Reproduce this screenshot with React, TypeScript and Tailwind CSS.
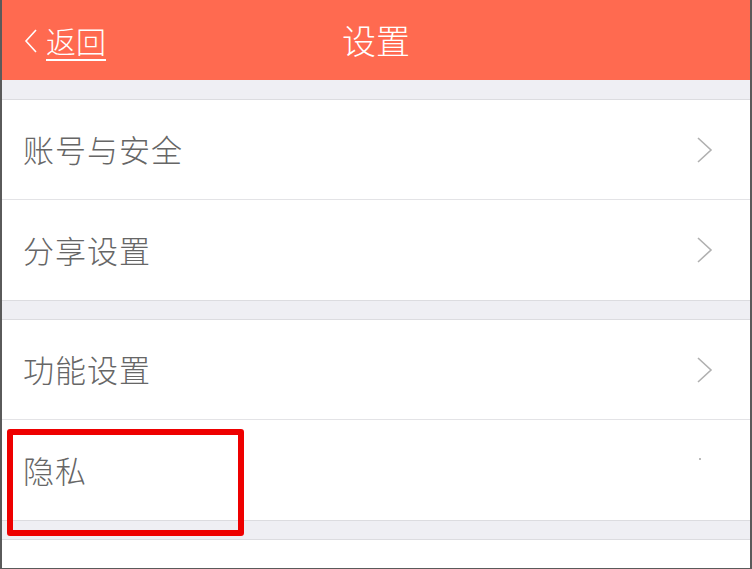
import { ReactNode } from "react";

const Chevron = () => (
  <svg width="18" height="28" viewBox="0 0 18 28" fill="none">
    <path d="M2 2 L15 14 L2 26" stroke="#b0b0b0" strokeWidth="1.6" />
  </svg>
);

const Row = ({
  label,
  last,
  children,
}: {
  label: string;
  last?: boolean;
  children?: ReactNode;
}) => (
  <div
    className={
      "h-[100px] flex items-center justify-between bg-white pl-[21px] pr-[36px] " +
      (last ? "" : "border-b border-[#e3e3e6]")
    }
  >
    <span className="text-[31px] font-light text-[#666] tracking-[1px]">{label}</span>
    {children}
  </div>
);

const App = (): JSX.Element => {
  return (
    <div
      className="relative w-[752px] h-[569px] overflow-hidden bg-[#efeff4] border-l-2 border-r-2 border-b border-[#5a5a5a]"
      style={{ fontFamily: '"Noto Sans CJK SC", "Noto Sans", sans-serif' }}
    >
      <header className="h-[80px] bg-[#ff6a50] grid grid-cols-[1fr_auto_1fr] items-center text-white">
        <div className="flex items-center pl-[22px] gap-[8px]">
          <svg width="14" height="26" viewBox="0 0 14 26" fill="none" className="mt-[2px]">
            <path d="M12 2 L2 13 L12 24" stroke="#fff" strokeWidth="1.6" />
          </svg>
          <span className="text-[30px] font-light underline underline-offset-[6px] decoration-[2px] leading-none">
            返回
          </span>
        </div>
        <h1 className="text-[34px] font-light leading-none">设置</h1>
        <div />
      </header>

      <div className="h-[20px] border-b border-[#dcdce0]" />
      <Row label="账号与安全">
        <Chevron />
      </Row>
      <Row label="分享设置" last>
        <Chevron />
      </Row>

      <div className="h-[20px] border-t border-b border-[#dcdce0]" />
      <Row label="功能设置">
        <Chevron />
      </Row>
      <Row label="隐私" last>
        <span className="w-[2px] h-[2px] bg-[#bbb] -mt-[22px] mr-[13px]" />
      </Row>

      <div className="h-[20px] border-t border-b border-[#dcdce0]" />
      <div className="h-[40px] bg-white" />

      {/* red annotation box */}
      <div className="absolute left-[5px] top-[429px] w-[237px] h-[107px] border-[6px] border-[#ee0000] rounded-[3px]" />
    </div>
  );
};

export default App;
